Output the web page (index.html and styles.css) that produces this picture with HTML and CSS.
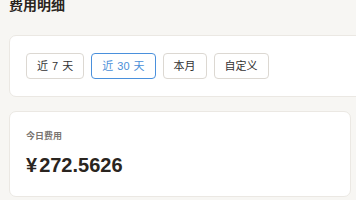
FILE: index.html
```html
<!DOCTYPE html>
<html lang="zh-CN">
<head>
<meta charset="utf-8">
<link rel="stylesheet" href="styles.css">
</head>
<body>
<main class="page">
  <h1 class="title">费用明细</h1>
  <section class="card card-filter">
    <div class="ranges">
      <button class="range">近 7 天</button>
      <button class="range active">近 30 天</button>
      <button class="range">本月</button>
      <button class="range">自定义</button>
    </div>
  </section>
  <section class="card card-stat">
    <div class="stat-label">今日费用</div>
    <div class="stat-value"><span class="currency">¥</span>272.5626</div>
  </section>
</main>
</body>
</html>
```
FILE: styles.css
```css
html, body {
  margin: 0;
  padding: 0;
  background: #f7f6f3;
  overflow: hidden;
}
body {
  font-family: "Liberation Sans", "Noto Sans CJK SC", sans-serif;
  color: #2a2520;
}
.page {
  padding: 0 5px 0 9px;
  display: flex;
  flex-direction: column;
}
.title {
  margin: -5px 0 20px;
  font-size: 14px;
  line-height: 20px;
  font-weight: 700;
  color: #2a2520;
}
.card {
  background: #fff;
  border: 1px solid #ebe8e3;
  border-radius: 7px;
  box-sizing: border-box;
}
.card-filter {
  width: 370px;
  padding: 17px 16px;
  margin-bottom: 14px;
}
.ranges {
  display: flex;
  gap: 7px;
}
.range {
  height: 26px;
  padding: 0 10px;
  border: 1px solid #dcd8d2;
  border-radius: 4px;
  background: #fff;
  color: #333;
  font-family: inherit;
  font-size: 11px;
  word-spacing: 1px;
  line-height: 24px;
}
.range.active {
  border-color: #4a90dc;
  color: #4a8fd8;
}
.card-stat {
  width: 342px;
  height: 86px;
  padding: 18px 16px;
}
.stat-label {
  font-size: 9px;
  line-height: 12px;
  font-weight: 600;
  color: #7a7570;
}
.stat-value {
  margin-top: 11px;
  font-size: 20px;
  line-height: 24px;
  font-weight: 600;
  color: #2a2520;
}
.currency {
  margin-right: 2px;
}
```
